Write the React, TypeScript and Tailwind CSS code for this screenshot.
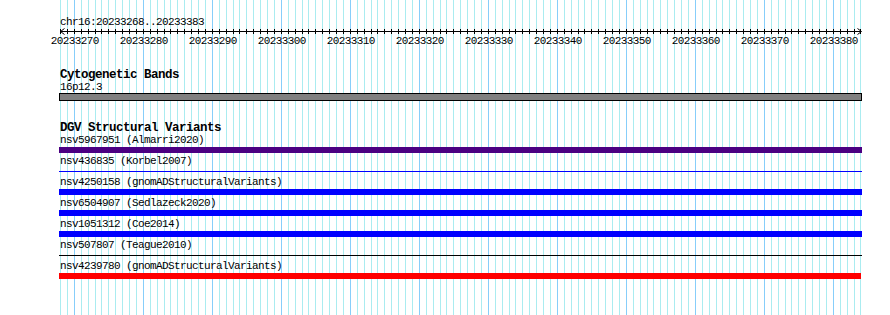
const START = 20233268;
const END = 20233383;
const LEFT = 60;
const PX_PER_BP = 6.9;

const xFor = (bp: number) => Math.round(LEFT + (bp - START) * PX_PER_BP) + 0.5;

type Variant = {
  id: string;
  source: string;
  kind: "bar" | "line";
  color: string;
};

const variants: Variant[] = [
  { id: "nsv5967951", source: "Almarri2020", kind: "bar", color: "bg-[#4b0082] w-[803px]" },
  { id: "nsv436835", source: "Korbel2007", kind: "line", color: "bg-[#0000ff] w-[803px]" },
  { id: "nsv4250158", source: "gnomADStructuralVariants", kind: "bar", color: "bg-[#0000ff] w-[803px]" },
  { id: "nsv6504907", source: "Sedlazeck2020", kind: "bar", color: "bg-[#0000ff] w-[803px]" },
  { id: "nsv1051312", source: "Coe2014", kind: "bar", color: "bg-[#0000ff] w-[803px]" },
  { id: "nsv507807", source: "Teague2010", kind: "line", color: "bg-black w-[803px]" },
  { id: "nsv4239780", source: "gnomADStructuralVariants", kind: "bar", color: "bg-[#ff0000] w-[802px]" },
];

function Grid() {
  const lines = [];
  for (let bp = START; bp <= END + 1; bp++) {
    const x = xFor(bp);
    const major = bp % 10 === 0;
    lines.push(
      <line key={bp} x1={x} x2={x} y1={0} y2={315} stroke={major ? "#87cefa" : "#aaecf0"} strokeWidth={1} />
    );
  }
  return (
    <svg className="absolute inset-0" width={890} height={315} shapeRendering="crispEdges">
      {lines}
    </svg>
  );
}

function Ruler() {
  const ticks = [];
  const labels = [];
  for (let bp = START; bp <= END + 1; bp++) {
    const x = xFor(bp);
    ticks.push(<line key={bp} x1={x} x2={x} y1={1} y2={6} stroke="black" />);
    if (bp % 10 === 0) {
      labels.push(
        <text key={bp} x={x + 0.3} y={16} textAnchor="middle" fontSize={11} letterSpacing={-0.6} fill="black">
          {bp}
        </text>
      );
    }
  }
  return (
    <svg className="block" width={890} height={20}>
      <g shapeRendering="crispEdges">
        <line x1={60} x2={861} y1={3.5} y2={3.5} stroke="black" />
        {ticks}
      </g>
      <path d="M64.5,0.5 L60.5,3.5 L64.5,6.5 M857.5,0.5 L861.5,3.5 L857.5,6.5" stroke="black" fill="none" />
      <g style={{ fontFamily: "'Liberation Mono', monospace" }}>{labels}</g>
    </svg>
  );
}

function VariantRow({ v }: { v: Variant }) {
  return (
    <div className="h-[21px]">
      <div className="pl-[1px] text-[11px] tracking-[-0.6px] leading-[12px] whitespace-pre">
        {v.id} ({v.source})
      </div>
      <div className="mt-[1px] h-[6px] flex items-center">
        <div className={v.kind === "bar" ? `h-[6px] ${v.color}` : `h-[1px] ${v.color}`} />
      </div>
    </div>
  );
}

export default function App() {
  return (
    <div className="relative w-[890px] h-[315px] overflow-hidden bg-white text-black font-['Liberation_Mono',monospace]">
      <Grid />
      <div className="relative">
        <div className="pl-[60px] pt-[16px] text-[11px] tracking-[-0.6px] leading-[12px]">chr16:20233268..20233383</div>
        <Ruler />
        <div className="pl-[59px]">
          <div className="mt-[21px] pl-[1px] text-[12.5px] tracking-[-0.5px] leading-[12px] font-bold">Cytogenetic Bands</div>
          <div className="pl-[1px] text-[11px] tracking-[-0.6px] leading-[12px]">16p12.3</div>
          <div className="h-[8px] w-[803px] border border-black bg-[#808080]" />
          <div className="mt-[21px] pl-[1px] text-[12.5px] tracking-[-0.5px] leading-[12px] font-bold">DGV Structural Variants</div>
          {variants.map((v) => (
            <VariantRow key={v.id} v={v} />
          ))}
        </div>
      </div>
    </div>
  );
}
